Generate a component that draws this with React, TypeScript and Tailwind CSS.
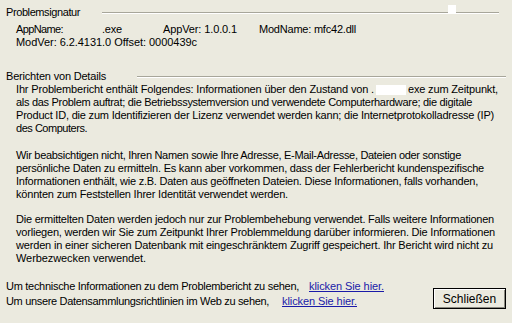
import React, { useLayoutEffect, useRef, useState } from "react";

// Fits one line of text to the width it takes in the reference by adjusting letter spacing at runtime.
const Fit = ({
  children,
  w,
  h = 13,
  className = "",
}: {
  children: React.ReactNode;
  w: number;
  h?: number;
  className?: string;
}) => {
  const ref = useRef<HTMLSpanElement>(null);
  const [ls, setLs] = useState(0);
  useLayoutEffect(() => {
    const el = ref.current;
    if (!el) return;
    el.style.letterSpacing = "0px";
    const width = el.getBoundingClientRect().width;
    const n = (el.textContent || "").length;
    if (n > 0) setLs((w - width) / n);
  }, [w]);
  return (
    <div className={`whitespace-nowrap ${className}`} style={{ height: h, lineHeight: `${h}px` }}>
      <span ref={ref} className="inline-block" style={{ letterSpacing: `${ls}px` }}>
        {children}
      </span>
    </div>
  );
};

export default function App() {
  return (
    <div
      className="relative w-[512px] h-[323px] overflow-hidden bg-[#ebeadf] text-black text-[11px]"
      style={{ fontFamily: '"Liberation Sans", Arial, sans-serif' }}
    >
      {/* stray white square over the first group line */}
      <div className="absolute left-[448px] top-[5px] w-[8px] h-[8px] bg-white" />

      <div className="flex flex-col pt-[6px]">
        <div className="flex items-center pl-[6px] h-[13px] leading-[13px]">
          <Fit w={74} className="w-[96px]">Problemsignatur</Fit>
          <div className="flex-1 mr-[13px] border-t border-t-[#a7a69a] border-b border-b-white" />
        </div>

        <div className="flex flex-col pl-[16px] mt-[4px]">
          <div className="flex whitespace-nowrap h-[13px] leading-[13px]">
            <Fit w={47} className="w-[86px]">AppName:</Fit>
            <Fit w={20} className="w-[61px]">.exe</Fit>
            <Fit w={74} className="w-[96px]">AppVer: 1.0.0.1</Fit>
            <Fit w={97}>ModName: mfc42.dll</Fit>
          </div>
          <Fit w={181}>ModVer: 6.2.4131.0 Offset: 0000439c</Fit>
        </div>

        <div className="mt-[21px] flex items-center pl-[6px] h-[13px] leading-[13px]">
          <Fit w={100} className="w-[131px]">Berichten von Details</Fit>
          <div className="flex-1 mr-[6px] border-t border-t-[#a7a69a] border-b border-b-white" />
        </div>

        <div className="flex flex-col pl-[16px]">
          <Fit w={482}>
            Ihr Problembericht enthält Folgendes: Informationen über den Zustand von .
            <span className="inline-block align-middle w-[30px] h-[10px] bg-white mx-[2px]" />
            exe zum Zeitpunkt,
          </Fit>
          <Fit w={456}>als das Problem auftrat; die Betriebssystemversion und verwendete Computerhardware; die digitale</Fit>
          <Fit w={478}>Product ID, die zum Identifizieren der Lizenz verwendet werden kann; die Internetprotokolladresse (IP)</Fit>
          <Fit w={71}>des Computers.</Fit>

          <div className="h-[14px]" />
          <Fit w={445}>Wir beabsichtigen nicht, Ihren Namen sowie Ihre Adresse, E-Mail-Adresse, Dateien oder sonstige</Fit>
          <Fit w={468}>persönliche Daten zu ermitteln. Es kann aber vorkommen, dass der Fehlerbericht kundenspezifische</Fit>
          <Fit w={462}>Informationen enthält, wie z.B. Daten aus geöffneten Dateien. Diese Informationen, falls vorhanden,</Fit>
          <Fit w={272}>könnten zum Feststellen Ihrer Identität verwendet werden.</Fit>

          <div className="h-[12px]" />
          <Fit w={478}>Die ermittelten Daten werden jedoch nur zur Problembehebung verwendet. Falls weitere Informationen</Fit>
          <Fit w={479}>vorliegen, werden wir Sie zum Zeitpunkt Ihrer Problemmeldung darüber informieren. Die Informationen</Fit>
          <Fit w={477}>werden in einer sicheren Datenbank mit eingeschränktem Zugriff gespeichert. Ihr Bericht wird nicht zu</Fit>
          <Fit w={130}>Werbezwecken verwendet.</Fit>
        </div>

        <div className="flex items-start justify-between pl-[6px] pr-[6px] mt-[14px]">
          <div className="flex flex-col">
            <div className="flex whitespace-nowrap h-[15px] leading-[15px]">
              <Fit w={293} h={15}>Um technische Informationen zu dem Problembericht zu sehen,</Fit>
              <Fit w={75} h={15} className="ml-[10px] text-[#1a1aa8]">
                <span className="underline">klicken Sie hier.</span>
              </Fit>
            </div>
            <div className="flex whitespace-nowrap h-[15px] leading-[15px]">
              <Fit w={263} h={15}>Um unsere Datensammlungsrichtlinien im Web zu sehen,</Fit>
              <Fit w={75} h={15} className="ml-[13px] text-[#1a1aa8]">
                <span className="underline">klicken Sie hier.</span>
              </Fit>
            </div>
          </div>
          <button className="mt-[9px] w-[73px] h-[21px] border border-black bg-[#ebeadf] shadow-[inset_1px_1px_0_#ffffff,inset_-1px_-1px_0_#8a897f] text-[12px] leading-[18px]">
            Schließen
          </button>
        </div>
      </div>
    </div>
  );
}
